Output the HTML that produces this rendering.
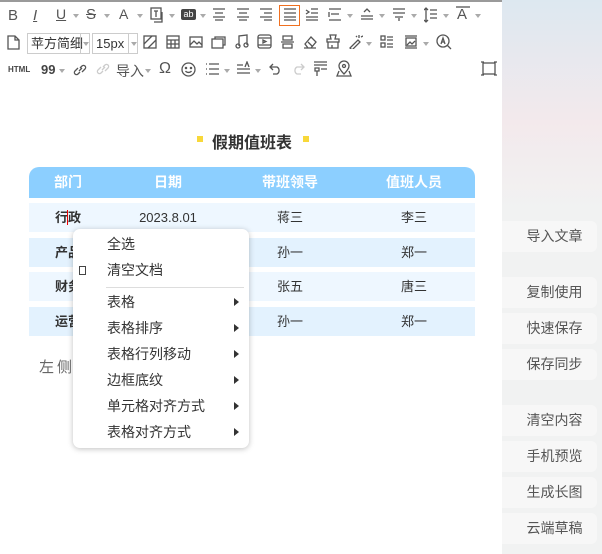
<!DOCTYPE html>
<html><head><meta charset="utf-8"><style>
*{margin:0;padding:0;box-sizing:border-box}
body{width:602px;height:554px;overflow:hidden;background:#f1f2f2;font-family:"Liberation Sans","Noto Sans CJK SC",sans-serif;position:relative}
.side{position:absolute;left:502px;top:0;width:100px;height:554px;background:linear-gradient(180deg,#dde8f0 0%,#f3e9ec 22%,#f1f2f2 38%,#f1f2f2 100%)}
.ed{position:absolute;left:0;top:0;width:502px;height:554px;background:#fff;border-top:2px solid #9a9a9a}
.btn{position:absolute;left:502px;width:95px;height:31px;background:#f7f7f7;border-radius:0 6px 6px 0;font-size:14px;color:#555;line-height:31px;text-align:center;padding-left:10px}
.i{position:absolute;color:#555;font-size:13px}
svg.ic{position:absolute;stroke:#555;fill:none;stroke-width:1.3}
.dd{position:absolute;width:0;height:0;border-left:3px solid transparent;border-right:3px solid transparent;border-top:4px solid #aaa}
.sel{position:absolute;border:1px solid #ccc;height:21px;font-size:13px;color:#333;line-height:19px;padding-left:3px;background:#fff}
.th{position:absolute;left:29px;top:165px;width:446px;height:31px;background:#8ccfff;border-radius:10px 10px 0 0;color:#fff;font-weight:bold;font-size:14px}
.row{position:absolute;left:29px;width:446px;height:29px;font-size:13px;color:#333}
.row .c:first-child{font-weight:bold}
.c{position:absolute;top:0;line-height:29px;transform:translateX(-50%)}
.th .c{line-height:31px}
.menu{position:absolute;left:73px;top:227px;width:176px;height:219px;background:#fff;border-radius:7px;box-shadow:0 1px 6px rgba(0,0,0,.25);font-size:14px;color:#333}
.mi{position:absolute;left:34px}
.ar{position:absolute;left:161px;width:0;height:0;border-top:4px solid transparent;border-bottom:4px solid transparent;border-left:5px solid #333}
</style></head><body>
<div class="side"></div>
<div class="ed">
<div class="i" style="left:8px;top:5px;font-size:15px">B</div>
<div class="i" style="left:33px;top:5px;font-size:15px;font-style:italic;text-decoration:underline">I</div>
<div class="i" style="left:56px;top:4px;font-size:14px;text-decoration:underline">U</div><div class="dd" style="left:73px;top:12px"></div>
<div class="i" style="left:86px;top:4px;font-size:15px;text-decoration:line-through">S</div><div class="dd" style="left:104px;top:12px"></div>
<div class="i" style="left:119px;top:4px;font-size:14px">A</div><div class="dd" style="left:137px;top:12px"></div>
<svg class="ic" style="left:150px;top:5px" width="16" height="16"><rect x="1" y="1" width="10" height="11"/><path d="M4 4h4M6 4v6M12 5v10H4"/></svg><div class="dd" style="left:169px;top:12px"></div>
<div style="position:absolute;left:181px;top:7px;width:15px;height:11px;background:#444;border-radius:2px;color:#fff;font-size:9px;line-height:11px;text-align:center">ab</div><div class="dd" style="left:200px;top:12px"></div>
<svg class="ic" style="left:212px;top:6px" width="14" height="13"><path d="M1 1h12M3 5h8M1 9h12M3 12h8"/></svg>
<svg class="ic" style="left:236px;top:6px" width="14" height="13"><path d="M1 1h12M3 5h8M1 9h12M3 12h8"/></svg>
<svg class="ic" style="left:259px;top:6px" width="14" height="13"><path d="M1 1h12M5 5h8M1 9h12M5 12h8"/></svg>
<div style="position:absolute;left:279px;top:3px;width:21px;height:21px;border:1px solid #f07020"></div>
<svg class="ic" style="left:283px;top:6px" width="14" height="13"><path d="M1 1h12M1 5h12M1 9h12M1 12h12"/></svg>
<svg class="ic" style="left:305px;top:6px" width="14" height="13"><path d="M6 1h7M6 5h7M1 9h12M1 12h12M1 2l3 2-3 2"/></svg>
<svg class="ic" style="left:328px;top:6px" width="14" height="13"><path d="M1 1h12M1 12h12M3 6h8M1 4v5"/></svg><div class="dd" style="left:347px;top:12px"></div>
<svg class="ic" style="left:360px;top:6px" width="14" height="13"><path d="M4 4l3-3 3 3M1 8h12M1 11h12"/></svg><div class="dd" style="left:379px;top:12px"></div>
<svg class="ic" style="left:392px;top:6px" width="14" height="14"><path d="M1 1h12M1 5h12M3 9h8M7 10v3"/></svg><div class="dd" style="left:411px;top:12px"></div>
<svg class="ic" style="left:424px;top:5px" width="14" height="16"><path d="M2 1v14M0 3l2-2 2 2M0 13l2 2 2-2M6 3h7M6 7h7M6 11h7"/></svg><div class="dd" style="left:443px;top:12px"></div>
<div class="i" style="left:457px;top:4px;font-size:15px">A</div><svg class="ic" style="left:455px;top:3px" width="16" height="4"><path d="M1 2h14"/></svg><div class="dd" style="left:475px;top:12px"></div>
<svg class="ic" style="left:7px;top:33px" width="13" height="15"><path d="M1 1h7l4 4v9H1zM8 1v4h4"/></svg>
<div class="sel" style="left:27px;top:31px;width:63px">苹方简细<span style="position:absolute;right:0;top:0;width:9px;height:19px;border-left:1px solid #ccc"></span></div><div class="dd" style="left:83px;top:40px"></div>
<div class="sel" style="left:92px;top:31px;width:46px">15px<span style="position:absolute;right:0;top:0;width:9px;height:19px;border-left:1px solid #ccc"></span></div><div class="dd" style="left:131px;top:40px"></div>
<svg class="ic" style="left:143px;top:33px" width="14" height="14"><rect x="1" y="1" width="12" height="12"/><path d="M1 9l8-8M5 13l8-8"/></svg>
<svg class="ic" style="left:166px;top:33px" width="14" height="14"><rect x="1" y="1" width="12" height="12"/><path d="M1 5h12M1 9h12M5 5v8M9 5v8"/></svg>
<svg class="ic" style="left:189px;top:33px" width="14" height="14"><rect x="1" y="2" width="12" height="10"/><path d="M1 10l4-4 3 3 2-2 3 3"/></svg>
<svg class="ic" style="left:211px;top:33px" width="15" height="14"><rect x="1" y="4" width="11" height="9"/><path d="M4 4V2h10v8h-2"/></svg>
<svg class="ic" style="left:235px;top:32px" width="14" height="16"><path d="M4 12V2l8-1v10"/><circle cx="3" cy="12" r="2"/><circle cx="11" cy="11" r="2"/></svg>
<svg class="ic" style="left:257px;top:32px" width="15" height="15"><rect x="1" y="1" width="13" height="13" rx="2"/><path d="M1 4h13M1 11h13M6 6v3l3-1.5z"/></svg>
<svg class="ic" style="left:280px;top:33px" width="15" height="14"><path d="M1 7h13M3 1h9v4H3zM3 9h9v4H3z"/></svg>
<svg class="ic" style="left:303px;top:33px" width="14" height="14"><path d="M2 9l6-7 5 5-5 6H5zM5 7l4 4M1 13h12"/></svg>
<svg class="ic" style="left:326px;top:32px" width="14" height="15"><path d="M4 1h6l-1 4h4v3H1V5h4zM2 8v6h10V8M6 14v-3"/></svg>
<svg class="ic" style="left:349px;top:32px" width="14" height="15"><path d="M1 14l8-8 2 2-8 8zM10 1v3M12 3l2-1M8 3L7 2"/></svg><div class="dd" style="left:366px;top:40px"></div>
<svg class="ic" style="left:380px;top:33px" width="14" height="13"><rect x="1" y="1" width="4" height="4"/><rect x="1" y="8" width="4" height="4"/><path d="M7 2h6M7 5h6M7 9h6M7 12h6"/></svg>
<svg class="ic" style="left:404px;top:33px" width="14" height="14"><path d="M1 1h12M1 13h12"/><rect x="2" y="3" width="10" height="8"/><path d="M3 10l3-3 2 2 3-3"/></svg><div class="dd" style="left:423px;top:40px"></div>
<svg class="ic" style="left:436px;top:32px" width="16" height="16"><circle cx="7" cy="7" r="6"/><path d="M11 11l4 4M5 10l2-6 2 6M5.5 8h3"/></svg>
<div class="i" style="left:8px;top:63px;font-size:8px;font-weight:bold;color:#444">HTML</div>
<div class="i" style="left:41px;top:60px;font-size:13px;font-weight:bold;color:#444">99</div><div class="dd" style="left:59px;top:67px"></div>
<svg class="ic" style="left:73px;top:61px" width="14" height="14"><path d="M6 8l3-3M5 5l-3 3a2 2 0 003 3l2-2M9 9l3-3a2 2 0 00-3-3L7 5"/></svg>
<svg class="ic" style="left:96px;top:60px;stroke:#ccc" width="14" height="14"><path d="M6 8l3-3M5 5l-3 3a2 2 0 003 3l2-2M9 9l3-3a2 2 0 00-3-3L7 5"/></svg>
<div class="i" style="left:116px;top:59px;font-size:14px">导入</div><div class="dd" style="left:145px;top:67px"></div>
<div class="i" style="left:159px;top:58px;font-size:16px">Ω</div>
<svg class="ic" style="left:181px;top:60px" width="15" height="15"><circle cx="7.5" cy="7.5" r="6.5"/><circle cx="5" cy="6" r=".6"/><circle cx="10" cy="6" r=".6"/><path d="M4.5 9a3.5 3 0 006 0"/></svg>
<svg class="ic" style="left:205px;top:61px" width="15" height="12"><path d="M1 1h1M1 6h1M1 11h1M4 1h10M4 6h10M4 11h10"/></svg><div class="dd" style="left:224px;top:67px"></div>
<svg class="ic" style="left:236px;top:59px" width="15" height="15"><path d="M1 4h6M1 8h13M1 12h13M9 6l2-5 2 5"/></svg><div class="dd" style="left:255px;top:67px"></div>
<svg class="ic" style="left:269px;top:61px" width="13" height="12"><path d="M4 1L1 4l3 3M1 4h7a4 4 0 010 7H4"/></svg>
<svg class="ic" style="left:292px;top:61px;stroke:#ccc" width="13" height="12"><path d="M9 1l3 3-3 3M12 4H5a4 4 0 000 7h4"/></svg>
<svg class="ic" style="left:313px;top:59px" width="15" height="16"><path d="M1 1h13M1 4h13M2 7h4v3H2zM8 8h6M4 10v5"/></svg>
<svg class="ic" style="left:336px;top:58px" width="16" height="17"><path d="M8 1a5 5 0 00-5 5c0 3 5 8 5 8s5-5 5-8a5 5 0 00-5-5zM3 11l-2 5h14l-2-5"/><circle cx="8" cy="6" r="1.5"/></svg>
<svg class="ic" style="left:481px;top:59px" width="16" height="15"><rect x="2" y="2" width="12" height="11"/><path d="M0 1h3M13 1h3M0 14h3M13 14h3"/></svg>

<div style="position:absolute;left:197px;top:134px;width:6px;height:6px;background:#f8d83a"></div>
<div style="position:absolute;left:303px;top:134px;width:6px;height:6px;background:#f8d83a"></div>
<div style="position:absolute;left:212px;top:127px;font-size:16px;font-weight:bold;color:#333">假期值班表</div>

<div class="th"><span class="c" style="left:39px">部门</span><span class="c" style="left:139px">日期</span><span class="c" style="left:261px">带班领导</span><span class="c" style="left:385px">值班人员</span></div>
<div class="row" style="top:201px;background:#eef7ff"><span class="c" style="left:39px">行政</span><span class="c" style="left:139px">2023.8.01</span><span class="c" style="left:261px">蒋三</span><span class="c" style="left:385px">李三</span></div>
<div style="position:absolute;left:67px;top:208px;width:1px;height:15px;background:#e00"></div>
<div class="row" style="top:236px;background:#e3f2fe"><span class="c" style="left:39px">产品</span><span class="c" style="left:261px">孙一</span><span class="c" style="left:385px">郑一</span></div>
<div class="row" style="top:270px;background:#eef7ff"><span class="c" style="left:39px">财务</span><span class="c" style="left:261px">张五</span><span class="c" style="left:385px">唐三</span></div>
<div class="row" style="top:305px;background:#e3f2fe"><span class="c" style="left:39px">运营</span><span class="c" style="left:261px">孙一</span><span class="c" style="left:385px">郑一</span></div>
<div style="position:absolute;left:39px;top:354px;font-size:15px;color:#666;letter-spacing:3px">左侧</div>

<div class="menu">
<div class="mi" style="top:5px">全选</div>
<div style="position:absolute;left:6px;top:37px;width:7px;height:9px;border:1px solid #444"></div>
<div class="mi" style="top:31px">清空文档</div>
<div style="position:absolute;left:33px;top:58px;width:138px;height:1px;background:#ddd"></div>
<div class="mi" style="top:63px">表格</div><div class="ar" style="top:69px"></div>
<div class="mi" style="top:89px">表格排序</div><div class="ar" style="top:95px"></div>
<div class="mi" style="top:115px">表格行列移动</div><div class="ar" style="top:121px"></div>
<div class="mi" style="top:141px">边框底纹</div><div class="ar" style="top:147px"></div>
<div class="mi" style="top:167px">单元格对齐方式</div><div class="ar" style="top:173px"></div>
<div class="mi" style="top:193px">表格对齐方式</div><div class="ar" style="top:199px"></div>
</div>
</div>

<div class="btn" style="top:221px">导入文章</div>
<div class="btn" style="top:277px">复制使用</div>
<div class="btn" style="top:313px">快速保存</div>
<div class="btn" style="top:349px">保存同步</div>
<div class="btn" style="top:405px">清空内容</div>
<div class="btn" style="top:441px">手机预览</div>
<div class="btn" style="top:477px">生成长图</div>
<div class="btn" style="top:513px">云端草稿</div>
</body></html>
